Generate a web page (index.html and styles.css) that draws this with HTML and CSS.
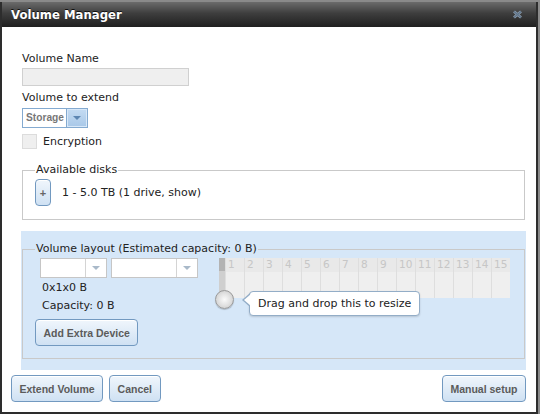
FILE: index.html
```html
<!DOCTYPE html>
<html lang="en">
<head>
    <meta charset="UTF-8">
    <title>Volume Manager</title>
    <link rel="stylesheet" href="styles.css">
</head>
<body>
    <div class="dialog">
        <div class="titlebar">
            <span class="title">Volume Manager</span>
            <svg class="close" width="11" height="9" viewBox="0 0 11 9">
                <path d="M2 1.5 L9 7.5 M9 1.5 L2 7.5" stroke="#8ea0b2" stroke-width="2.8"/>
                <path d="M2 1.5 L9 7.5 M9 1.5 L2 7.5" stroke="#5f7388" stroke-width="1.4"/>
            </svg>
        </div>

        <div class="content">
            <div class="form">
                <label class="field-label">Volume Name</label>
                <input class="text-input" type="text">

                <label class="field-label second">Volume to extend</label>
                <div class="select select-blue">
                    <span class="select-value">Storage</span>
                    <span class="select-arrow"></span>
                </div>

                <div class="check-row">
                    <span class="checkbox"></span>
                    <span>Encryption</span>
                </div>

                <fieldset class="group disks">
                    <legend>Available disks</legend>
                    <div class="disk-row">
                        <button class="btn btn-add">+</button>
                        <span>1 - 5.0 TB (1 drive, show)</span>
                    </div>
                </fieldset>
            </div>

            <div class="layout-area">
                <fieldset class="group layout">
                    <legend>Volume layout (Estimated capacity: 0 B)</legend>
                    <div class="layout-row">
                        <div class="layout-left">
                            <div class="select-pair">
                                <div class="select select-plain narrow">
                                    <span class="select-value"></span>
                                    <span class="select-arrow"></span>
                                </div>
                                <div class="select select-plain wide">
                                    <span class="select-value"></span>
                                    <span class="select-arrow"></span>
                                </div>
                            </div>
                            <div class="stat">0x1x0 B</div>
                            <div class="stat">Capacity: 0 B</div>
                            <button class="btn btn-extra">Add Extra Device</button>
                        </div>

                        <div class="slider">
                            <div class="disk-grid" id="diskGrid"></div>
                            <div class="knob"></div>
                            <div class="tooltip">Drag and drop this to resize</div>
                        </div>
                    </div>
                </fieldset>
            </div>

            <div class="actions">
                <div class="actions-left">
                    <button class="btn">Extend Volume</button>
                    <button class="btn">Cancel</button>
                </div>
                <button class="btn">Manual setup</button>
            </div>
        </div>
    </div>

    <script>
        // build the 15 disk columns: header cells first, then body cells
        let grid = document.getElementById("diskGrid");
        let track = document.createElement("div");
        track.className = "track";
        grid.appendChild(track);
        for (let i = 1; i <= 15; i++) {
            let head = document.createElement("div");
            head.className = "cell head";
            head.innerText = i;
            grid.appendChild(head);
        }
        for (let i = 1; i <= 15; i++) {
            let cell = document.createElement("div");
            cell.className = "cell";
            grid.appendChild(cell);
        }
    </script>
</body>
</html>
```

FILE: styles.css
```css
body {
    margin: 0;
    background: #8a8a8a;
    font-family: "DejaVu Sans", Verdana, sans-serif;
    font-size: 11px;
    color: #222;
}
.dialog {
    width: 534px;
    margin-top: 2px;
    border: 2px solid #2d2d2d;
    border-top: 0;
    background: #fff;
}
.titlebar {
    height: 25px;
    display: flex;
    align-items: center;
    justify-content: space-between;
    padding: 0 13px 0 9px;
    background: linear-gradient(#6b6b6b, #3e3e3e 45%, #1f1f1f);
}
.title {
    color: #fff;
    font-weight: bold;
    font-size: 11.7px;
    text-shadow: 0 -1px 0 #111;
}
.close {
    display: block;
    margin-top: -1px;
}

/* top form */
.form {
    padding: 24px 11px 0 20px;
}
.field-label {
    display: block;
    line-height: 16px;
}
.field-label.second {
    margin-top: 4px;
}
.text-input {
    display: block;
    box-sizing: border-box;
    width: 167px;
    height: 18px;
    margin: 1px 0 0;
    padding: 0;
    background: #efefef;
    border: 1px solid #d0d0d0;
}
.select {
    display: flex;
    box-sizing: border-box;
    height: 20px;
    background: #fff;
}
.select-value {
    flex: 1;
    padding-left: 3px;
    line-height: 18px;
    font-family: "Liberation Sans", Arial, sans-serif;
    font-weight: bold;
    font-size: 10.2px;
    color: #777;
}
.select-arrow {
    position: relative;
    width: 20px;
}
.select-arrow::after {
    content: "";
    position: absolute;
    left: 6px;
    top: 7px;
    border-left: 4px solid transparent;
    border-right: 4px solid transparent;
    border-top: 4px solid #a9b9c9;
}
.select-blue {
    width: 66px;
    margin-top: 2px;
    border: 1px solid #84aad0;
}
.select-blue .select-arrow {
    width: 20px;
    border-left: 1px solid #84aad0;
    background: linear-gradient(#c4dbf2, #a9c8e8);
    box-shadow: inset 0 0 0 1px #d8e8f8;
}
.select-blue .select-arrow::after {
    border-top-color: #5d86b2;
}
.select-plain {
    border: 1px solid #c6c6c6;
}
.select-plain .select-arrow {
    border-left: 1px solid #d4d4d4;
}
.select-plain.narrow {
    width: 67px;
}
.select-plain.wide {
    width: 87px;
}
.check-row {
    display: flex;
    align-items: center;
    gap: 6px;
    margin-top: 6px;
    height: 15px;
}
.checkbox {
    box-sizing: border-box;
    width: 15px;
    height: 15px;
    background: #efefef;
    border: 1px solid #dcdcdc;
}

/* fieldsets */
.group {
    margin: 0;
    padding: 1px 12px 12px;
    border: 1px solid #c9c9c9;
    min-width: 0;
}
.group legend {
    padding: 0 1px;
    line-height: 16px;
}
.disks {
    margin-top: 13px;
    padding-bottom: 13px;
}
.disk-row {
    display: flex;
    align-items: center;
    gap: 11px;
}

/* buttons */
.btn {
    box-sizing: border-box;
    height: 27px;
    padding: 0 7.5px;
    border: 1px solid #7299c0;
    border-radius: 4px;
    background: linear-gradient(#f0f6fc, #cfe1f3);
    box-shadow: inset 0 1px 0 #fff;
    font-family: "Liberation Sans", Arial, sans-serif;
    font-weight: bold;
    font-size: 10.5px;
    color: #5b5b5b;
    cursor: pointer;
}
.btn-add {
    width: 16px;
    padding: 0;
    font-size: 11px;
    color: #666;
}

/* volume layout */
.layout-area {
    margin: 11px 10px 0 19px;
    padding: 10px 1px 11px;
    background: #d6e7f8;
}
.layout-row {
    display: flex;
    align-items: flex-start;
}
.layout-left {
    width: 163px;
}
.select-pair {
    display: flex;
    gap: 4px;
    margin-left: 5px;
}
.stat {
    margin: 2px 0 0 7px;
    line-height: 16px;
}
.btn-extra {
    margin-top: 5px;
}
.slider {
    position: relative;
    margin-left: 21px;
}
.disk-grid {
    display: grid;
    grid-template-columns: 6px repeat(15, 19px);
    grid-template-rows: 14px 26px;
    background: #efefef;
}
.track {
    grid-row: 1 / 3;
    background: linear-gradient(#b3b3b3 0, #b3b3b3 13px, #cfcfcf 13px);
}
.cell {
    border-left: 1px solid #dedede;
    background: #efefef;
}
.cell.head {
    padding-left: 2px;
    background: #e9e9e9;
    line-height: 13px;
    font-size: 10.5px;
    color: #c6c6c6;
}
.knob {
    position: absolute;
    left: -4px;
    top: 32px;
    box-sizing: border-box;
    width: 19px;
    height: 19px;
    border: 1px solid #9a9a9a;
    border-radius: 50%;
    background: radial-gradient(circle at 50% 50%, #fafafa 0, #e4e4e4 45%, #c4c4c4 100%);
    box-shadow: 0 1px 1px rgba(0, 0, 0, 0.2);
}
.tooltip {
    position: absolute;
    left: 30px;
    top: 33px;
    box-sizing: border-box;
    height: 25px;
    padding: 0 8px;
    line-height: 23px;
    white-space: nowrap;
    background: #fff;
    border: 1px solid #93adc7;
    border-radius: 4px;
    box-shadow: 0 1px 2px rgba(0, 0, 0, 0.15);
}
.tooltip::before {
    content: "";
    position: absolute;
    left: -8px;
    top: 1px;
    border-top: 7px solid transparent;
    border-bottom: 7px solid transparent;
    border-right: 8px solid #93adc7;
}
.tooltip::after {
    content: "";
    position: absolute;
    left: -6px;
    top: 2px;
    border-top: 6px solid transparent;
    border-bottom: 6px solid transparent;
    border-right: 7px solid #fff;
}

/* bottom buttons */
.actions {
    display: flex;
    justify-content: space-between;
    padding: 5px 10px 10px 9px;
}
.actions-left {
    display: flex;
    gap: 6px;
}
```
